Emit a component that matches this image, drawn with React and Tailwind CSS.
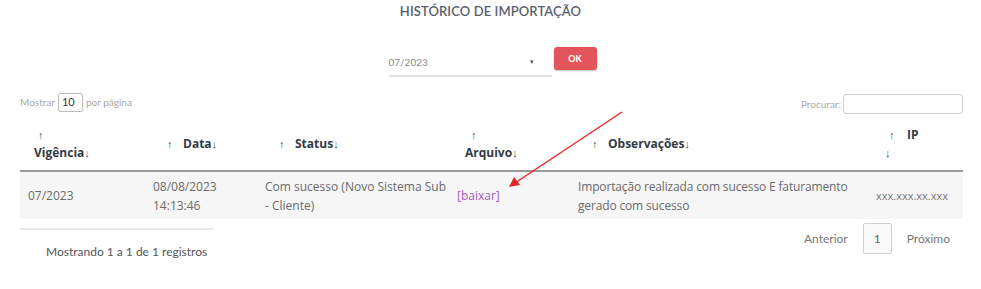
import React from 'react';

const arrowCls = "font-['Liberation_Sans',sans-serif] text-[11px] font-normal text-[#4a4a4a]";

function Up() {
  return <span className={arrowCls}>↑</span>;
}
function Down() {
  return <span className={arrowCls}>↓</span>;
}

export default function App() {
  return (
    <div className="relative w-[981px] h-[289px] overflow-hidden bg-white font-['Lato',sans-serif]">
      <h1 className="pt-[3px] text-center text-[13px] leading-[16px] font-semibold tracking-[0.1px] text-[#59606a]">
        HISTÓRICO DE IMPORTAÇÃO
      </h1>

      <div className="mt-[28px] flex items-start justify-center pl-[4px]">
        <div className="flex h-[30px] w-[163px] items-center justify-between border-b-2 border-[#e2e2e2] pt-[2px]">
          <span className="text-[10px] text-[#8a8a8a]">07/2023</span>
          <span className="mr-[18px] mb-[2px] text-[7px] text-[#555]">▾</span>
        </div>
        <button className="ml-[2px] h-[23px] w-[43px] rounded-[3px] bg-[#e4555b] text-[9px] font-bold text-white shadow-[0_1px_2px_rgba(0,0,0,0.25)]">
          OK
        </button>
      </div>

      <div className="ml-[20px] mr-[18px] mt-[16px] flex items-start justify-between text-[10px] text-[#a8a8a8]">
        <div className="flex items-center">
          <span>Mostrar</span>
          <span className="mx-[3px] flex h-[19px] w-[25px] items-center rounded-[2px] border border-[#bdbdbd] pl-[3px] text-[11px] text-[#333]">10</span>
          <span>por página</span>
        </div>
        <div className="mt-[1px] flex items-center">
          <span>Procurar:</span>
          <span className="ml-[2px] h-[20px] w-[120px] rounded-[3px] border border-[#cfcfcf]" />
        </div>
      </div>

      <div className="ml-[20px] mr-[18px] mt-[5px]">
        <div className="grid grid-cols-[125px_112px_192px_121px_298px_95px] items-center border-b-2 border-[#9a9a9a] pt-[7px] pb-[8px] font-['Open_Sans',sans-serif] text-[12px] font-bold leading-[18px] text-[#333a44]">
          <div className="pl-[14px]">
            <div className="pl-[4px]"><Up /></div>
            <div>Vigência<Down /></div>
          </div>
          <div className="flex pl-[22px]">
            <span className="w-[16px]"><Up /></span>Data<Down />
          </div>
          <div className="flex pl-[22px]">
            <span className="w-[16px]"><Up /></span>Status<Down />
          </div>
          <div className="pl-[16px]">
            <div className="pl-[6px]"><Up /></div>
            <div>Arquivo<Down /></div>
          </div>
          <div className="flex pl-[22px]">
            <span className="w-[16px]"><Up /></span>Observações<Down />
          </div>
          <div className="pl-[17px]">
            <div className="flex pl-[4px]"><span className="w-[18px]"><Up /></span>IP</div>
            <div><Down /></div>
          </div>
        </div>

        <div className="grid h-[47px] grid-cols-[125px_112px_192px_121px_298px_95px] items-center bg-[#f6f6f6] font-['Open_Sans',sans-serif] text-[12px] leading-[19px] text-[#6a6a6a]">
          <div className="pl-[8px]">07/2023</div>
          <div className="pl-[8px]">08/08/2023<br />14:13:46</div>
          <div className="pl-[8px]">Com sucesso (Novo Sistema Sub<br />- Cliente)</div>
          <div className="pl-[8px] text-[#a55cb8]">[baixar]</div>
          <div className="pl-[8px] tracking-[-0.15px]">Importação realizada com sucesso E faturamento<br />gerado com sucesso</div>
          <div className="pl-[8px] text-[11px] text-[#777]">xxx.xxx.xx.xxx</div>
        </div>

        <div className="flex items-start justify-between">
          <div className="mt-[9px]">
            <div className="h-[2px] w-[193px] bg-[#e8e8e8]" />
            <div className="mt-[14px] pl-[26px] text-[12px] leading-[16px] text-[#555]">Mostrando 1 a 1 de 1 registros</div>
          </div>
          <div className="mt-[4px] flex items-center pr-[13px] text-[12px] text-[#777]">
            <span>Anterior</span>
            <span className="mx-[15px] flex h-[31px] w-[29px] items-center justify-center rounded-[2px] border border-[#cfcfcf] bg-[#fafafa] text-[#666]">1</span>
            <span>Próximo</span>
          </div>
        </div>
      </div>

      <svg className="pointer-events-none absolute left-0 top-0" width="981" height="289">
        <line x1="622" y1="112" x2="515" y2="183" stroke="#e8252a" strokeWidth="1.5" />
        <polygon points="509,187 514,177 520,185" fill="#e8252a" />
      </svg>
    </div>
  );
}
